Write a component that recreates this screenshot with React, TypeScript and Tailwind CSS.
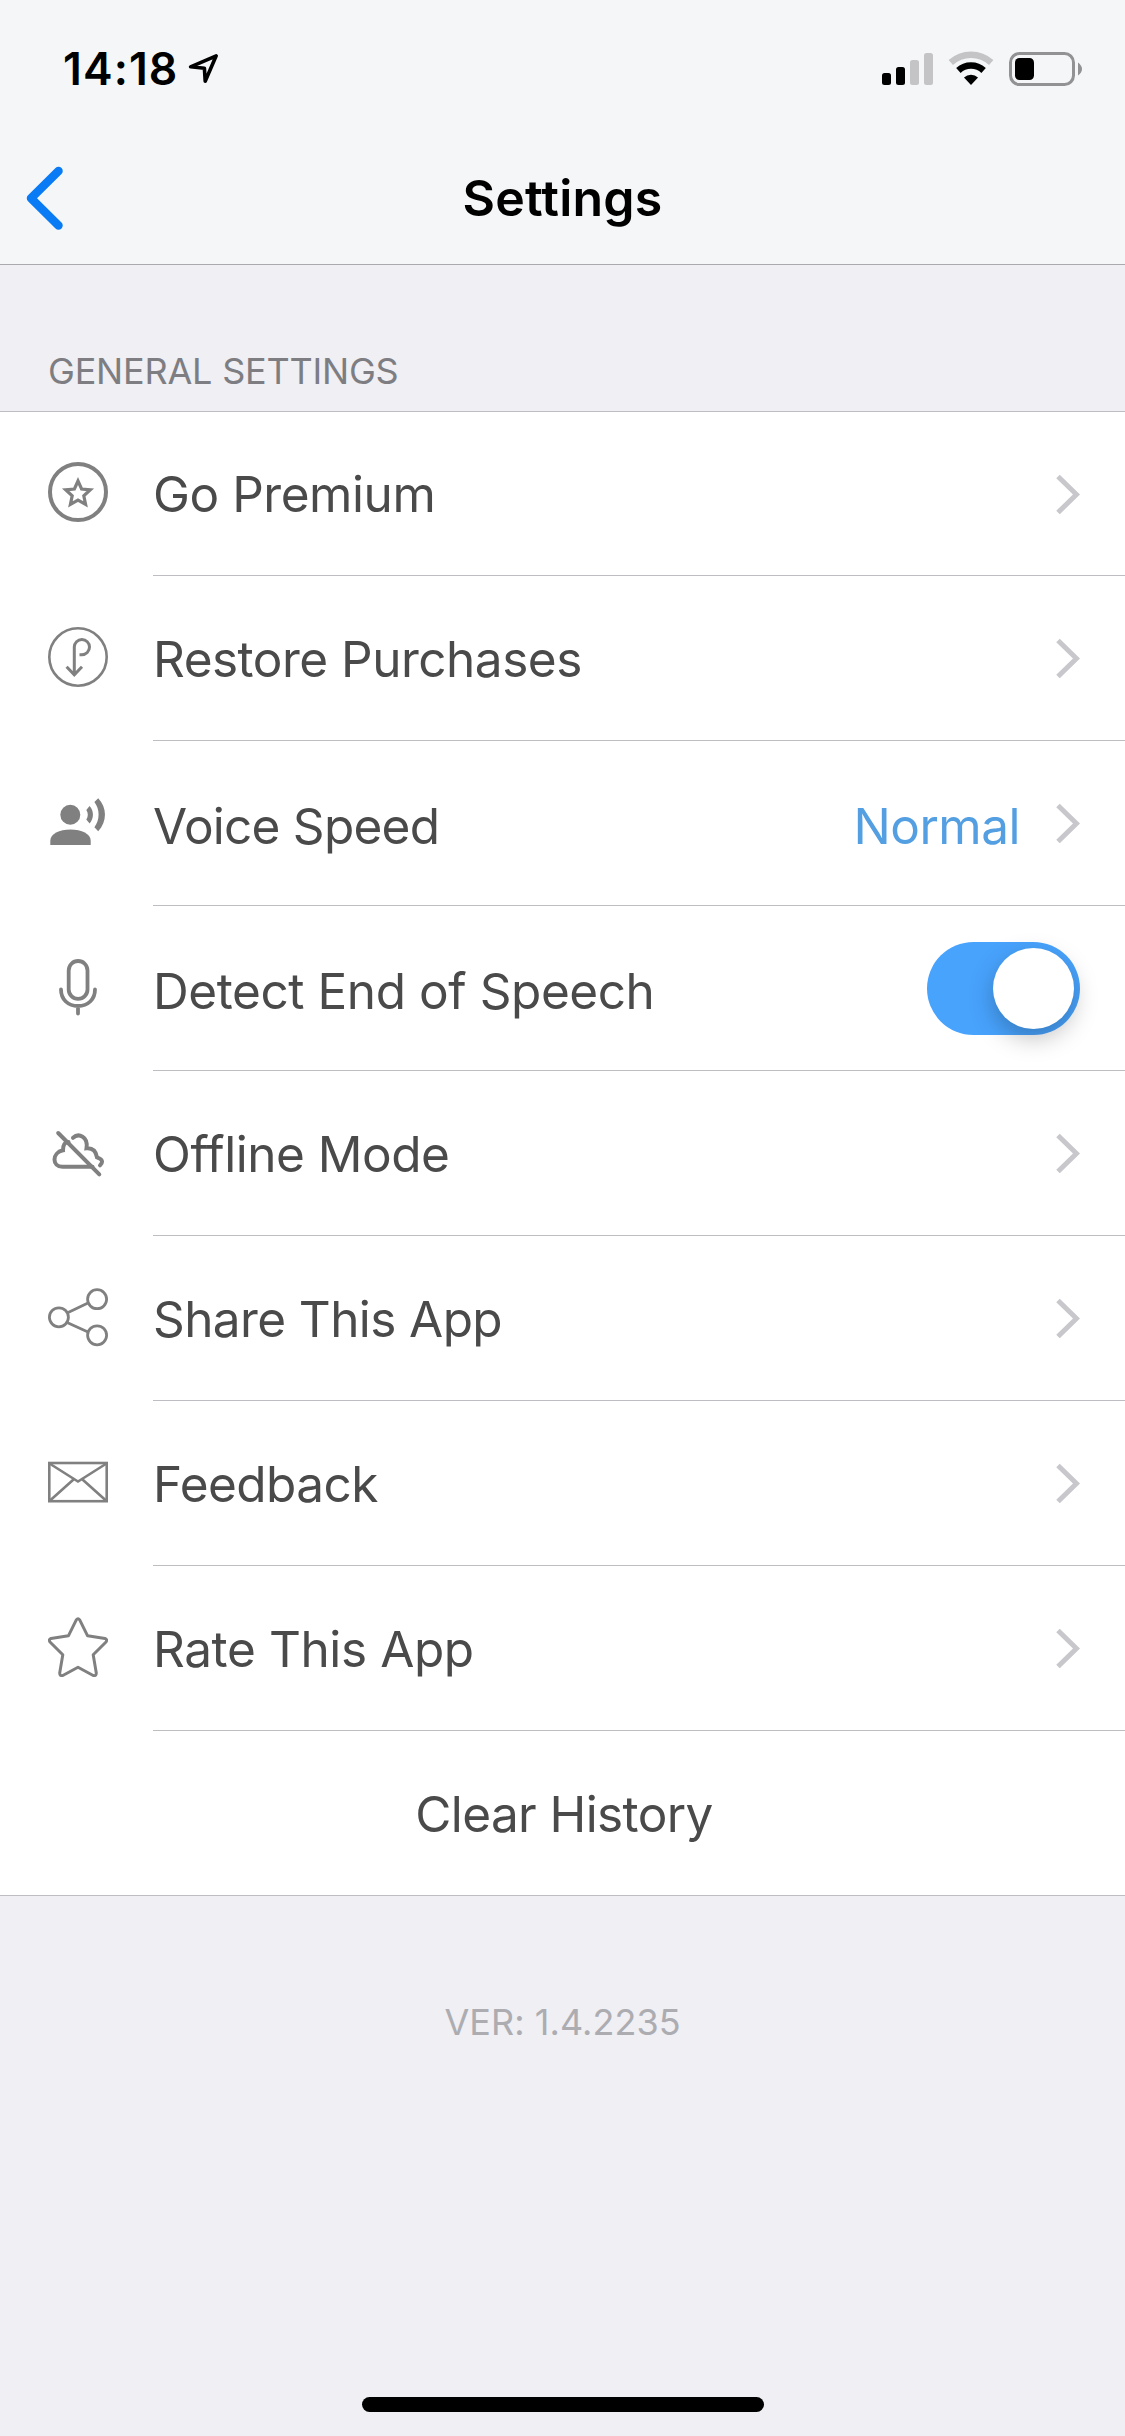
import React, {useState} from "react";

const StarCircleIcon = () => (
    <svg width="60" height="60" viewBox="0 0 60 60" fill="none" stroke="#808080">
        <circle cx="30" cy="30" r="28" strokeWidth="4"/>
        <path
            d="M30 19 33.600 27 42.300 27.800 35.800 33.700 37.600 42.400 30 38.200 22.400 42.400 24.200 33.700 17.700 27.800 26.400 27Z"
            strokeWidth="3.200"/>
    </svg>
);

const RestoreIcon = () => (
    <svg width="60" height="60" viewBox="0 0 60 60" fill="none" stroke="#808080">
        <circle cx="30" cy="30" r="28.700" strokeWidth="2.600"/>
        <path d="M26.300 48V20.100a7.600 7.600 0 1 1 7.600 7.600h-2.400M18.600 39.800l7.700 8.100 7.700-8.100" strokeWidth="3"/>
    </svg>
);

const VoiceIcon = () => (
    <svg width="60" height="60" viewBox="0 3.3 60 60" fill="#808080">
        <circle cx="22.300" cy="26" r="10"/>
        <path d="M2.300 56.200V52c0-7 9-11.300 20.200-11.300S42.700 45 42.700 52v4.200z"/>
        <path d="M38.300 21.200c2 3 2 6.600 0 9.600l3.300 3.900c4.500-5 4.500-12.400 0-17.400z"/>
        <path d="M46.400 13.400c5.600 7.500 5.600 17.700 0 25.200l3.800 3.900c9-9.800 9-23.600 0-33z"/>
    </svg>
);

const MicIcon = () => (
    <svg width="60" height="60" viewBox="0 0.5 60 60" fill="none" stroke="#808080" strokeWidth="3.800">
        <rect x="20.700" y="4.500" width="18.800" height="37.800" rx="9.400"/>
        <path d="M13 33c0 10 7 16.500 17 16.500s17-6.500 17-16.500M30 49.500v7.500" strokeLinecap="round"/>
    </svg>
);

const OfflineIcon = () => (
    <svg width="60" height="60" viewBox="0 0 60 60" fill="none" stroke="#808080" strokeWidth="4"
         strokeLinecap="round">
        <path d="M10.200 11 51.300 52.300"/>
        <path d="M44.500 44.800H14.500c-10.500 0-11-14 0.500-16.500C14.800 23 17 20 20.500 20"/>
        <path d="M25 15.800c5.500-5 15.500-1.500 13.500 10.500 6-0.500 9.500 3 10.500 9 7.500 2.500 5 6 3 8"/>
    </svg>
);

const ShareIcon = () => (
    <svg width="60" height="60" viewBox="0 0 60 60" fill="none" stroke="#808080" strokeWidth="2.800">
        <circle cx="10.900" cy="30.300" r="9.500"/>
        <circle cx="49.100" cy="12.200" r="9.500"/>
        <circle cx="49.100" cy="48.300" r="9.500"/>
        <path d="M19.600 25.700 40 16M19.600 35.800 40 45"/>
    </svg>
);

const MailIcon = () => (
    <svg width="60" height="60" viewBox="0 0 60 60" fill="none" stroke="#808080" strokeWidth="2.600">
        <rect x="1.300" y="11" width="57.400" height="38.200"/>
        <path d="M1.500 11.500 30 29.500 58.500 11.500M1.500 49 25.500 27.500M58.500 49 34.500 27.500"/>
    </svg>
);

const StarIcon = () => (
    <svg width="60" height="60" viewBox="0 0 60 60" fill="none" stroke="#808080" strokeWidth="3"
         strokeLinejoin="round">
        <path
            d="M28.300 2.800Q30 0.500 31.700 2.800L39.600 18.800 57 21.400Q59.700 22.400 58 25L45.200 37.700 48.300 56Q48.300 59.200 45.200 58.500L30 50.300 14.800 58.500Q11.700 59.200 11.700 56L14.800 37.700 2 25Q0.300 22.400 3 21.400L20.400 18.800Z"/>
    </svg>
);

const Chevron = () => (
    <svg width="24" height="40" viewBox="0 0 24 40" fill="none" stroke="#c7c7cc" strokeWidth="5">
        <path d="M2 2.500 20.500 20.500 2 38.500"/>
    </svg>
);

const StatusBar = () => (
    <div className="flex h-[132px] justify-between pr-[42px] pl-[63px]">
        <div className="flex items-start">
            <span className="mt-[43px] w-[125px] text-[44.500px] leading-[52px] font-semibold tracking-[1.1px] text-black">14:18</span>
            <svg className="mt-[52px]" width="32" height="34" viewBox="0 0 32 34" fill="none" stroke="#000"
                 strokeWidth="3.600" strokeLinejoin="round">
                <path d="M28.200 3.800 2.600 14.800 16.400 16.200 17.200 29.200Z"/>
            </svg>
        </div>
        <div className="mt-[50px] flex items-start">
            <svg width="52" height="36" viewBox="0 0 52 36">
                <rect x="0" y="23" width="9" height="12" rx="2.500"/>
                <rect x="14" y="17" width="9" height="18" rx="2.500"/>
                <rect x="28" y="10" width="9" height="25" rx="2.500" fill="#c4c4c6"/>
                <rect x="42" y="3" width="9" height="32" rx="2.500" fill="#c4c4c6"/>
            </svg>
            <svg className="ml-[14px]" width="48" height="36" viewBox="0 0 48 36" fill="none">
                <path d="M2.800 12.500a30 30 0 0 1 40.400 0" stroke="#c4c4c6" strokeWidth="6.500"/>
                <path d="M10.400 20.500a18.500 18.500 0 0 1 25.200 0" stroke="#000" strokeWidth="6.500"/>
                <path d="M16 27.500a10.500 10.500 0 0 1 14 0L23 35z" fill="#000"/>
            </svg>
            <svg className="ml-[13px]" width="74" height="36" viewBox="0 0 74 36">
                <rect x="1.500" y="3.500" width="63" height="31" rx="9" fill="none" stroke="#929294" strokeWidth="3"/>
                <rect x="6" y="8" width="19" height="22" rx="4.500"/>
                <path d="M69 12.500q4 3 4 6.500t-4 6.500z" fill="#929294"/>
            </svg>
        </div>
    </div>
);

const rows = [
    {icon: <StarCircleIcon/>, label: 'Go Premium', text: 'pt-[2px] tracking-[-0.45px]'},
    {icon: <RestoreIcon/>, label: 'Restore Purchases', text: 'pt-[2px] tracking-[-0.5px]'},
    {icon: <VoiceIcon/>, label: 'Voice Speed', text: 'pt-[6px] tracking-[-0.75px]', value: 'Normal'},
    {icon: <MicIcon/>, label: 'Detect End of Speech', text: 'pt-[6px] tracking-[-0.43px]', toggle: true},
    {icon: <OfflineIcon/>, label: 'Offline Mode', text: 'pt-[2px] tracking-[-0.47px]'},
    {icon: <ShareIcon/>, label: 'Share This App', text: 'pt-[2px] tracking-[-0.6px]'},
    {icon: <MailIcon/>, label: 'Feedback', text: 'pt-[2px] tracking-[-0.55px]'},
    {icon: <StarIcon/>, label: 'Rate This App', text: 'pt-[2px] tracking-[-0.4px]'},
];

const App = () => {
    const [detect, setDetect] = useState(true);

    return (
        <div className="flex h-[2436px] w-[1125px] flex-col bg-[#efeff4] font-['Inter',sans-serif]">
            <header className="h-[265px] border-b border-[#a9a9ae] bg-[#f5f6f8]">
                <StatusBar/>
                <div className="grid h-[132px] grid-cols-[1fr_auto_1fr] items-center">
                    <button type="button" aria-label="Back" className="pl-[26px]">
                        <svg width="38" height="64" viewBox="0 0 38 64" fill="none" stroke="#087bf5"
                             strokeWidth="8.500" strokeLinecap="round" strokeLinejoin="round">
                            <path d="M32.500 5 5 32.200 32.500 59.500"/>
                        </svg>
                    </button>
                    <h1 className="text-[50px] leading-[60px] font-semibold tracking-[0.2px] text-black">Settings</h1>
                </div>
            </header>

            <h2 className="h-[146px] pt-[84px] pl-[48px] text-[36px] leading-[44px] tracking-[-0.2px] text-[#7d7d82]">GENERAL SETTINGS</h2>

            <div className="border-b border-[#bebec2] bg-white">
                {rows.map(({icon, label, text, value, toggle}) => (
                    <div key={label} className="flex h-[165px] first:border-t first:border-[#bebec2]">
                        <div className="flex w-[153px] items-center pb-[4px] pl-[48px]">{icon}</div>
                        <div className="flex flex-1 items-center border-b border-[#bebec2] pr-[45px]">
                            <span className={`flex-1 text-[49.500px] text-[#4a4a4a] ${text}`}>{label}</span>
                            {value && <span className="mr-[36px] pt-[6px] text-[49.500px] tracking-[-0.5px] text-[#539fe2]">{value}</span>}
                            {toggle ? (
                                <button
                                    type="button"
                                    aria-label={label}
                                    onClick={() => setDetect(!detect)}
                                    className={`flex h-[93px] w-[153px] items-center rounded-full p-[6px] ${detect ? 'justify-end bg-[#48a3fd]' : 'justify-start bg-gray-300'}`}>
                                    <span className="size-[81px] rounded-full bg-white shadow-[0_9px_24px_rgba(0,0,0,0.25)]"/>
                                </button>
                            ) : <Chevron/>}
                        </div>
                    </div>
                ))}
                <button type="button" className="h-[164px] w-full pt-[2px] pl-[3px] text-[49.500px] tracking-[-0.6px] text-[#4a4a4a]">Clear History</button>
            </div>

            <p className="pt-[104px] text-center text-[36px] leading-[44px] tracking-[0.05px] text-[#acacb1]">VER: 1.4.2235</p>
            <div className="mx-auto mt-auto mb-[24px] h-[15px] w-[402px] rounded-full bg-black"/>
        </div>
    );
};

export default App;
